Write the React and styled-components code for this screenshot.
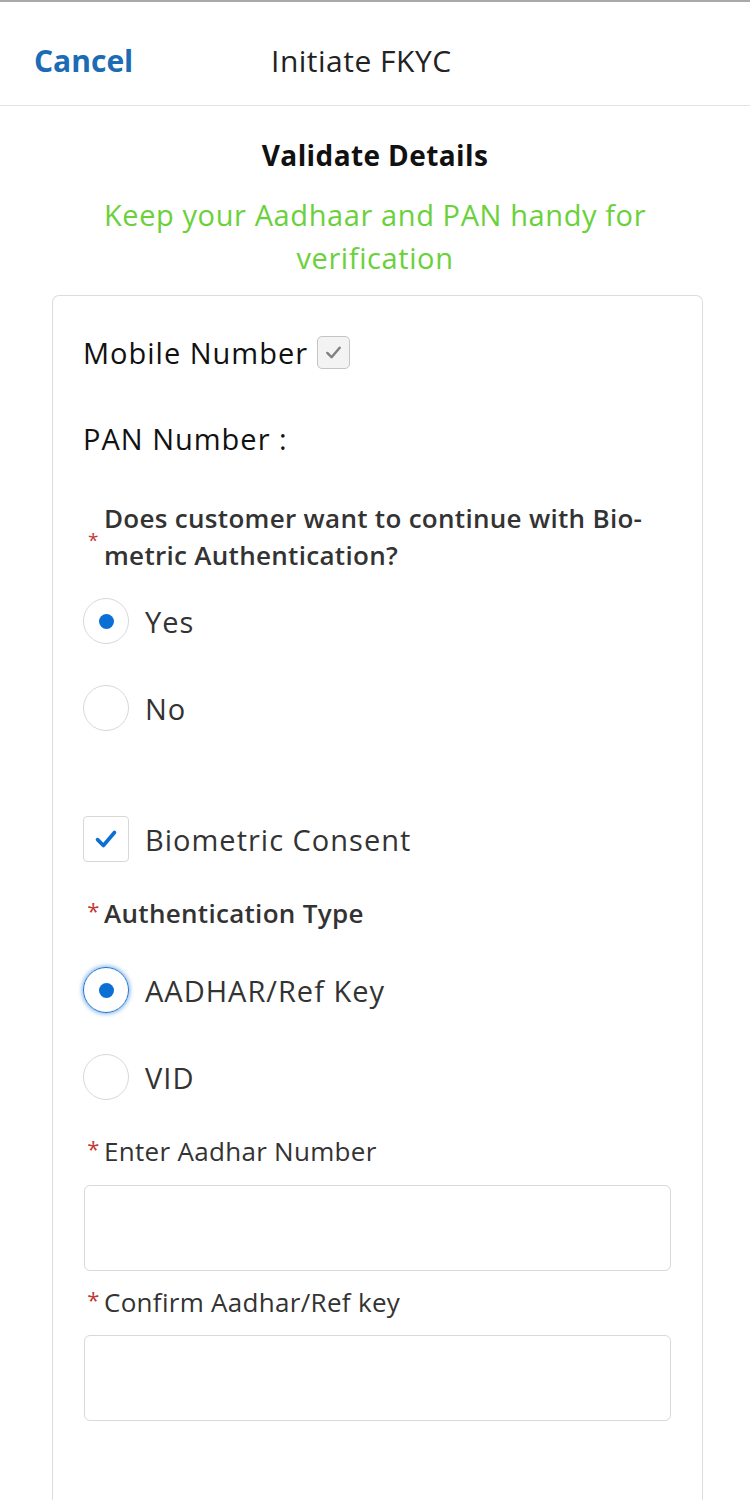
import styled, { createGlobalStyle } from 'styled-components';

const GlobalStyle = createGlobalStyle`
  html, body {
    margin: 0;
    padding: 0;
    background: #fff;
  }
  body {
    font-family: "Open Sans", "Noto Sans", "Liberation Sans", sans-serif;
    color: #181818;
  }
`;

const Page = styled.div`
  width: 750px;
  min-height: 1500px;
  border-top: 2px solid #a9a9a9;
  box-sizing: border-box;
`;

const TopBar = styled.div`
  height: 104px;
  display: flex;
  align-items: center;
  border-bottom: 1px solid #e4e4e4;
  padding: 14px 0 0 34px;
  box-sizing: border-box;
`;

const CancelButton = styled.button`
  border: 0;
  background: none;
  padding: 0;
  font: inherit;
  font-size: 30px;
  font-weight: 700;
  color: #1b6cb5;
  width: 237px;
  text-align: left;
`;

const TopTitle = styled.div`
  font-size: 30px;
  letter-spacing: 0.5px;
  color: #222;
`;

const Heading = styled.h2`
  margin: 29px 0 0;
  text-align: center;
  font-size: 28px;
  letter-spacing: 0.4px;
  line-height: 40px;
  font-weight: 700;
  color: #111;
`;

const Hint = styled.p`
  margin: 18px auto 0;
  width: 620px;
  text-align: center;
  font-size: 29px;
  letter-spacing: 0.6px;
  line-height: 43px;
  color: #6ad13a;
`;

const Card = styled.div`
  margin: 16px 0 0 52px;
  width: 651px;
  min-height: 1210px;
  border: 1px solid #dcdcdc;
  border-bottom: 0;
  border-radius: 7px 7px 0 0;
  box-sizing: border-box;
  padding: 39px 33px 0 30px;
  display: flex;
  flex-direction: column;
`;

const InfoRow = styled.div`
  display: flex;
  align-items: center;
  gap: 9px;
  height: 34px;
  margin-top: ${(p) => p.$mt || 0}px;
  font-size: 29px;
  letter-spacing: 1px;
  color: #111;
`;

const LockedBox = styled.span`
  width: 31px;
  height: 31px;
  border: 1px solid #c4c4c4;
  border-radius: 5px;
  background: #f3f3f3;
  display: inline-flex;
  align-items: center;
  justify-content: center;
`;

const Question = styled.div`
  display: flex;
  align-items: center;
  margin-top: ${(p) => p.$mt || 0}px;
  font-size: 26px;
  letter-spacing: 0.3px;
  line-height: 37px;
  font-weight: 600;
  color: #333;
`;

const Required = styled.span`
  color: #c23934;
  font-size: ${(p) => (p.$top ? 22 : 19)}px;
  font-weight: 400;
  width: 21px;
  flex: none;
  text-align: center;
  align-self: ${(p) => (p.$top ? 'flex-start' : 'center')};
  line-height: ${(p) => (p.$top ? '30px' : '22px')};
  margin-top: ${(p) => (p.$top ? 0 : 6)}px;
`;

const Label = styled.div`
  display: flex;
  margin-top: ${(p) => p.$mt || 0}px;
  font-size: 26px;
  letter-spacing: 0.3px;
  font-weight: ${(p) => (p.$bold ? 600 : 400)};
  line-height: 36px;
  color: #333;
`;

const Option = styled.label`
  display: flex;
  align-items: center;
  gap: 16px;
  margin-top: ${(p) => p.$mt || 0}px;
  font-size: 29px;
  letter-spacing: 1px;
  color: #333;
`;

const Radio = styled.span`
  width: 44px;
  height: 44px;
  border-radius: 50%;
  border: 1px solid ${(p) => (p.$focus ? '#1b75d0' : '#d8d8d8')};
  box-shadow: ${(p) => (p.$focus ? '0 0 4px 1px rgba(27, 117, 208, 0.55)' : 'none')};
  display: inline-flex;
  align-items: center;
  justify-content: center;
  flex: none;

  &::after {
    content: '';
    width: 15px;
    height: 15px;
    border-radius: 50%;
    background: ${(p) => (p.$checked ? '#0b6fd4' : 'transparent')};
  }
`;

const CheckBox = styled.span`
  width: 44px;
  height: 44px;
  border: 1px solid #d8d8d8;
  border-radius: 4px;
  display: inline-flex;
  align-items: center;
  justify-content: center;
  flex: none;
`;

const TextInput = styled.input`
  display: block;
  margin-top: ${(p) => p.$mt || 0}px;
  margin-left: 1px;
  width: 587px;
  height: 86px;
  box-sizing: border-box;
  border: 1px solid #d9d9d9;
  border-radius: 6px;
  font: inherit;
  font-size: 26px;
  padding: 0 16px;
  outline: none;
`;

function Tick({ color, size = 20, width = 3 }) {
  return (
    <svg width={size} height={size} viewBox="0 0 20 20" fill="none">
      <path
        d="M3.5 10.5 L8 15 L16.5 5"
        stroke={color}
        strokeWidth={width}
        strokeLinecap="round"
        strokeLinejoin="round"
      />
    </svg>
  );
}

function RequiredLabel({ children, mt, bold }) {
  return (
    <Label $mt={mt} $bold={bold}>
      <Required $top>*</Required>
      {children}
    </Label>
  );
}

export default function App() {
  return (
    <Page>
      <GlobalStyle />
      <TopBar>
        <CancelButton>Cancel</CancelButton>
        <TopTitle>Initiate FKYC</TopTitle>
      </TopBar>

      <Heading>Validate Details</Heading>
      <Hint>Keep your Aadhaar and PAN handy for verification</Hint>

      <Card>
        <InfoRow>
          Mobile Number
          <LockedBox>
            <Tick color="#808080" size={19} width={2.6} />
          </LockedBox>
        </InfoRow>
        <InfoRow $mt={52}>PAN Number :</InfoRow>

        <Question $mt={45}>
          <Required>*</Required>
          <span>
            Does customer want to continue with Bio-
            <br />
            metric Authentication?
          </span>
        </Question>

        <Option $mt={24}>
          <Radio $checked />
          Yes
        </Option>
        <Option $mt={41}>
          <Radio />
          No
        </Option>

        <Option $mt={85}>
          <CheckBox>
            <Tick color="#0b6fd4" size={26} width={2.8} />
          </CheckBox>
          Biometric Consent
        </Option>

        <RequiredLabel mt={33} bold>
          Authentication Type
        </RequiredLabel>

        <Option $mt={36}>
          <Radio $checked $focus />
          AADHAR/Ref Key
        </Option>
        <Option $mt={41}>
          <Radio />
          VID
        </Option>

        <RequiredLabel mt={33}>Enter Aadhar Number</RequiredLabel>
        <TextInput $mt={16} />

        <RequiredLabel mt={13}>Confirm Aadhar/Ref key</RequiredLabel>
        <TextInput $mt={15} />
      </Card>
    </Page>
  );
}
